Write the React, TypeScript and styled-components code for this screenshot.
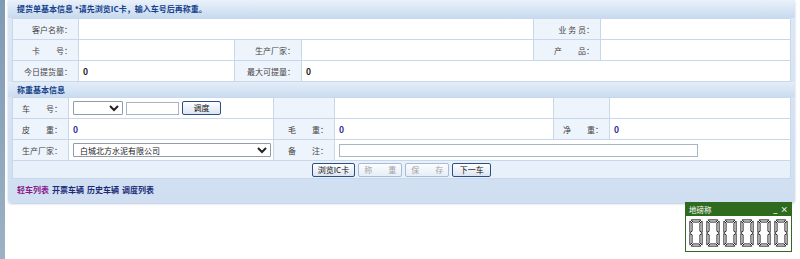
import React from 'react';
import styled, { createGlobalStyle } from 'styled-components';

const GlobalStyle = createGlobalStyle`
  html, body {
    margin: 0;
    padding: 0;
    background: #fff;
  }
  body {
    font-family: "Noto Sans CJK SC", "Liberation Sans", sans-serif;
    font-size: 8px;
    color: #333;
  }
`;

const Digit = () => (
  <svg width="14" height="28" viewBox="0 0 16 32">
    <g fill="#fff" stroke="#1a1a1a" strokeWidth="1.1" strokeLinejoin="round">
      <polygon points="2.5,1 13.5,1 11.5,3.5 4.5,3.5" />
      <polygon points="2.5,31 13.5,31 11.5,28.5 4.5,28.5" />
      <polygon points="1,2.5 3.5,4.5 3.5,14 1,15.5" />
      <polygon points="1,16.5 3.5,18 3.5,27.5 1,29.5" />
      <polygon points="15,2.5 12.5,4.5 12.5,14 15,15.5" />
      <polygon points="15,16.5 12.5,18 12.5,27.5 15,29.5" />
    </g>
  </svg>
);

const App = () => {
  return (
    <Page>
      <GlobalStyle />
      <LeftBar />
      <Main>
        <Panel>
          <Title>提货单基本信息 *请先浏览IC卡，输入车号后再称重。</Title>
          <Body>
            <Table>
              <colgroup>
                <col style={{ width: 66 }} />
                <col style={{ width: 156 }} />
                <col style={{ width: 67 }} />
                <col style={{ width: 232 }} />
                <col style={{ width: 67 }} />
                <col />
              </colgroup>
              <tbody>
                <tr>
                  <Label>客户名称：</Label>
                  <Value colSpan={3} />
                  <Label>业 务 员：</Label>
                  <Value />
                </tr>
                <tr>
                  <Label>卡　　号：</Label>
                  <Value />
                  <Label>生产厂家：</Label>
                  <Value />
                  <Label>产　　品：</Label>
                  <Value />
                </tr>
                <tr>
                  <Label>今日提货量：</Label>
                  <Value>
                    <Num>0</Num>
                  </Value>
                  <Label>最大可提量：</Label>
                  <Value colSpan={3}>
                    <Num>0</Num>
                  </Value>
                </tr>
              </tbody>
            </Table>
            <SectionTitle>称重基本信息</SectionTitle>
            <Table>
              <colgroup>
                <col style={{ width: 56 }} />
                <col style={{ width: 205 }} />
                <col style={{ width: 61 }} />
                <col style={{ width: 219 }} />
                <col style={{ width: 56 }} />
                <col />
              </colgroup>
              <tbody>
                <tr>
                  <Label>车　　号：</Label>
                  <Value>
                    <Inline>
                      <Select $w={50}>
                        <option />
                      </Select>
                      <TextInput $w={53} />
                      <Button>调度</Button>
                    </Inline>
                  </Value>
                  <Label />
                  <Value />
                  <Label />
                  <Value />
                </tr>
                <tr>
                  <Label>皮　　重：</Label>
                  <Value>
                    <Num $blue>0</Num>
                  </Value>
                  <Label>毛　　重：</Label>
                  <Value>
                    <Num $blue>0</Num>
                  </Value>
                  <Label>净　　重：</Label>
                  <Value>
                    <Num $blue>0</Num>
                  </Value>
                </tr>
                <tr>
                  <Label>生产厂家：</Label>
                  <Value>
                    <Select $w={198}>
                      <option>白城北方水泥有限公司</option>
                    </Select>
                  </Value>
                  <Label>备　　注：</Label>
                  <Value colSpan={3}>
                    <TextInput $w={359} />
                  </Value>
                </tr>
                <tr>
                  <ActionCell colSpan={6}>
                    <Inline $center>
                      <Button>浏览IC卡</Button>
                      <Button disabled>称　　重</Button>
                      <Button disabled>保　　存</Button>
                      <Button>下一车</Button>
                    </Inline>
                  </ActionCell>
                </tr>
              </tbody>
            </Table>
            <Links>
              <LinkItem $visited>轻车列表</LinkItem>
              <LinkItem>开票车辆</LinkItem>
              <LinkItem>历史车辆</LinkItem>
              <LinkItem>调度列表</LinkItem>
            </Links>
          </Body>
        </Panel>
      </Main>
      <ScaleWindow>
        <WindowBar>
          <span>地磅称</span>
          <WindowTools>
            <span>_</span>
            <span>×</span>
          </WindowTools>
        </WindowBar>
        <Digits>
          {[0, 1, 2, 3, 4, 5].map((i) => (
            <Digit key={i} />
          ))}
        </Digits>
      </ScaleWindow>
    </Page>
  );
};

export default App;

const Page = styled.div`
  position: relative;
  display: flex;
  width: 800px;
  height: 259px;
  overflow: hidden;
`;

const LeftBar = styled.div`
  width: 5px;
  flex: none;
  background: linear-gradient(#7f9ab3, #9cb1c4);
`;

const Main = styled.div`
  flex: 1;
  padding: 0 5px 0 3px;
`;

const Panel = styled.div`
  background: linear-gradient(#dce8f6, #cfdff1);
  border-radius: 0 0 4px 4px;
  box-shadow: 0 1px 2px rgba(120, 150, 190, 0.5);
  padding-bottom: 5px;
`;

const Title = styled.div`
  height: 18px;
  line-height: 18px;
  padding-left: 9px;
  font-weight: bold;
  color: #15428b;
  background: linear-gradient(#e9f1fa, #c8daef);
`;

const Body = styled.div`
  padding: 0 4px;
`;

const Table = styled.table`
  width: 100%;
  border-collapse: collapse;
  table-layout: fixed;
  background: #fff;
`;

const Label = styled.td`
  height: 20px;
  padding: 0 6px 0 0;
  border: 1px solid #c8d8ea;
  background: #eef4fc;
  text-align: right;
  color: #444;
  white-space: nowrap;
`;

const Value = styled.td`
  height: 20px;
  padding: 0 0 0 4px;
  border: 1px solid #c8d8ea;
  background: #fff;
`;

const Num = styled.span<{ $blue?: boolean }>`
  font-weight: bold;
  font-size: 8.5px;
  color: ${(p) => (p.$blue ? '#2f2f9a' : '#222')};
`;

const SectionTitle = styled.div`
  height: 15px;
  line-height: 15px;
  font-weight: bold;
  color: #15428b;
  background: linear-gradient(#e3edf9, #cbdcf0);
  margin: 0 -4px;
  padding-left: 9px;
`;

const Inline = styled.div<{ $center?: boolean }>`
  display: flex;
  align-items: center;
  gap: 3px;
  justify-content: ${(p) => (p.$center ? 'center' : 'flex-start')};
`;

const Select = styled.select<{ $w: number }>`
  width: ${(p) => p.$w}px;
  height: 14px;
  padding: 0 0 0 2px;
  font-family: "Noto Sans CJK SC", sans-serif;
  font-size: 8px;
  color: #222;
  border: 1px solid #8f9cab;
  border-radius: 1px;
  background: #fff;
  box-sizing: border-box;
`;

const TextInput = styled.input<{ $w: number }>`
  width: ${(p) => p.$w}px;
  height: 13px;
  padding: 0;
  border: 1px solid #a7b6c7;
  box-sizing: border-box;
  background: #fff;
`;

const Button = styled.button`
  height: 14px;
  padding: 0 5px;
  font-family: "Noto Sans CJK SC", sans-serif;
  font-size: 8px;
  line-height: 12px;
  color: #111;
  background: linear-gradient(#ffffff, #dbe5f1);
  border: 1px solid #2c4f86;
  border-radius: 2px;
  min-width: 39px;
  &:disabled {
    color: #a3a3a3;
    border-color: #a7bbd6;
    background: linear-gradient(#fbfdff, #e6eef7);
  }
`;

const ActionCell = styled.td`
  height: 17px;
  padding: 0;
  border: 1px solid #c8d8ea;
  background: #e8f0fa;
`;

const Links = styled.div`
  display: flex;
  gap: 3px;
  height: 17px;
  align-items: center;
  padding-left: 5px;
  margin-top: 2px;
`;

const LinkItem = styled.span<{ $visited?: boolean }>`
  color: ${(p) => (p.$visited ? '#8a1a8a' : '#1c2a78')};
  font-weight: bold;
`;

const ScaleWindow = styled.div`
  position: absolute;
  left: 685px;
  top: 202px;
  width: 107px;
  height: 50px;
  box-sizing: border-box;
  border: 1px solid #2f6b1f;
  background: #fff;
`;

const WindowBar = styled.div`
  height: 13px;
  display: flex;
  justify-content: space-between;
  align-items: center;
  padding: 0 3px;
  background: #2f6b1f;
  color: #fff;
  font-size: 7.5px;
`;

const WindowTools = styled.div`
  display: flex;
  gap: 3px;
  font-weight: bold;
`;

const Digits = styled.div`
  display: flex;
  justify-content: space-between;
  padding: 3px 3px 0;
`;
